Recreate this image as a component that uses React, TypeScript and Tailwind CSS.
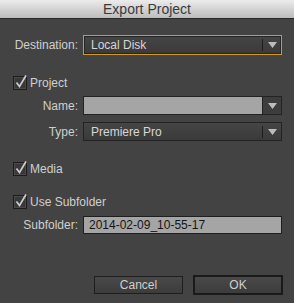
import React from "react";

// Small down-pointing triangle used by the popup menus
function Arrow() {
  return (
    <svg width="9" height="6" viewBox="0 0 9 6" className="block">
      <path d="M0 0 H9 L4.5 6 Z" fill="#bdbdbd" />
    </svg>
  );
}

// Checkbox with a tick and a label
function Check({ label, className = "" }: { label: string; className?: string }) {
  return (
    <div className={`flex items-center h-[14px] pl-[13px] ${className}`}>
      <div className="relative w-[14px] h-[14px] bg-[#383838] border border-[#1c1c1c] shadow-[inset_0_0_0_1px_#4a4a4a]">
        <svg width="14" height="15" viewBox="0 0 14 15" className="absolute left-0 -top-[3px]">
          <path d="M2.5 8.5 L5.5 12.5 L12 1.5" stroke="#cdcdcd" strokeWidth="1.7" fill="none" />
        </svg>
      </div>
      <span className="ml-[3px] text-[12px] text-[#cfcfcf]">{label}</span>
    </div>
  );
}

// Label column + field
function Row({
  label,
  children,
  className = "",
}: {
  label: string;
  children: React.ReactNode;
  className?: string;
}) {
  return (
    <div className={`flex items-center ${className}`}>
      <span className="w-[78px] text-right text-[12px] text-[#cfcfcf] shrink-0">{label}</span>
      <div className="ml-[5px] w-[199px]">{children}</div>
    </div>
  );
}

// Dark popup menu
function Dropdown({ value, focused = false }: { value: string; focused?: boolean }) {
  return (
    <div
      className={`flex items-center bg-gradient-to-b from-[#454545] to-[#3a3a3a] ${
        focused
          ? "h-[20px] border-[1.5px] border-[#d29a22] shadow-[inset_0_0_0_1px_#262626]"
          : "h-[19px] border border-[#232323]"
      }`}
    >
      <span className="flex-1 pl-[7px] text-[12px] text-[#d6d6d6] leading-none">{value}</span>
      <div className="w-px h-[12px] bg-[#1e1e1e]" />
      <div className="w-[18px] flex justify-center">
        <Arrow />
      </div>
    </div>
  );
}

export default function App() {
  return (
    <div
      className="w-[294px] h-[303px] bg-[#434343] flex flex-col"
      style={{ fontFamily: '"Liberation Sans", Arial, sans-serif' }}
    >
      {/* Title bar */}
      <div className="h-[19px] border-b border-[#2a2a2a] bg-gradient-to-b from-[#ececec] to-[#bcbcbc] flex items-center justify-center">
        <span className="text-[14px] text-[#3b3b3b] leading-none">Export Project</span>
      </div>

      <Row label="Destination:" className="mt-[16px]">
        <Dropdown value="Local Disk" focused />
      </Row>

      <Check label="Project" className="mt-[21px]" />

      <Row label="Name:" className="mt-[6px]">
        <div className="h-[19px] flex border border-[#232323]">
          <div className="flex-1 bg-[#a5a5a5]" />
          <div className="w-[19px] border-l border-[#232323] bg-[#3d3d3d] flex items-center justify-center">
            <Arrow />
          </div>
        </div>
      </Row>

      <Row label="Type:" className="mt-[7px]">
        <Dropdown value="Premiere Pro" />
      </Row>

      <Check label="Media" className="mt-[21px]" />

      <Check label="Use Subfolder" className="mt-[19px]" />

      <Row label="Subfolder:" className="mt-[7px]">
        <div className="h-[18px] bg-[#a5a5a5] border border-[#1e1e1e] flex items-center pl-[5px] text-[12px] text-[#151515]">
          2014-02-09_10-55-17
        </div>
      </Row>

      {/* Buttons */}
      <div className="mt-[41px] flex items-center pl-[94px] gap-[10px]">
        <button className="w-[89px] h-[18px] border border-[#1e1e1e] bg-gradient-to-b from-[#494949] to-[#3c3c3c] text-[12px] text-[#cfcfcf] leading-none">
          Cancel
        </button>
        <button className="w-[90px] h-[20px] border-2 border-[#1a1a1a] bg-gradient-to-b from-[#494949] to-[#3c3c3c] text-[12px] text-[#cfcfcf] leading-none">
          OK
        </button>
      </div>
    </div>
  );
}
